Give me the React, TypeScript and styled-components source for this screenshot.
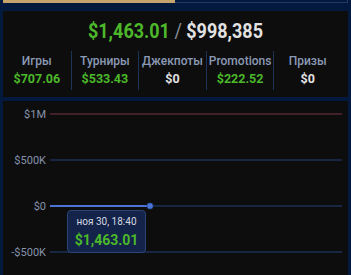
import styled, { createGlobalStyle } from "styled-components";

const GlobalStyle = createGlobalStyle`
  html, body {
    margin: 0;
    padding: 0;
    background: #031a3e;
    font-family: Roboto, "Liberation Sans", sans-serif;
    overflow: hidden;
  }
`;

interface Stat {
  label: string;
  value: string;
  positive: boolean;
}

const stats: Stat[] = [
  { label: "Игры", value: "$707.06", positive: true },
  { label: "Турниры", value: "$533.43", positive: true },
  { label: "Джекпоты", value: "$0", positive: false },
  { label: "Promotions", value: "$222.52", positive: true },
  { label: "Призы", value: "$0", positive: false },
];

const ticks = [
  { label: "$1M", y: 13, color: "#7b3343" },
  { label: "$500K", y: 59, color: "#22427a" },
  { label: "$0", y: 105, color: "#22427a" },
  { label: "-$500K", y: 151, color: "#22427a" },
];

function App() {
  return (
    <Page>
      <GlobalStyle />
      <Progress>
        <ProgressFill style={{ width: "50%" }} />
      </Progress>

      <Summary>
        <Total>
          <Green>$1,463.01</Green>
          <Slash> / </Slash>
          <Goal>$998,385</Goal>
        </Total>
        <StatGrid>
          {stats.map((s, i) => (
            <StatCell key={s.label} $first={i === 0}>
              <StatLabel>{s.label}</StatLabel>
              <StatValue $positive={s.positive}>{s.value}</StatValue>
            </StatCell>
          ))}
        </StatGrid>
      </Summary>

      <ChartCard>
        <svg width="345" height="180" viewBox="0 0 345 180">
          {ticks.map((t) => (
            <g key={t.label}>
              <text
                x="43"
                y={t.y + 4}
                textAnchor="end"
                fontSize="11"
                fontFamily="Roboto, sans-serif"
                fill="#8593ab"
              >
                {t.label}
              </text>
              <line x1="47" y1={t.y} x2="339" y2={t.y} stroke={t.color} strokeWidth="1" />
            </g>
          ))}
          <line x1="47" y1="105" x2="147" y2="105" stroke="#4a74d6" strokeWidth="2" />
          <circle cx="147" cy="105" r="3" fill="#4a74d6" stroke="#2c4f9e" strokeWidth="1" />
        </svg>
        <Tooltip>
          <TipDate>ноя 30, 18:40</TipDate>
          <TipValue>$1,463.01</TipValue>
        </Tooltip>
      </ChartCard>
    </Page>
  );
}

const Page = styled.div`
  padding: 0 3px;
  height: 275px;
  box-sizing: border-box;
`;

const Progress = styled.div`
  height: 3px;
  box-sizing: border-box;
  border: 1px solid #1f3a66;
  border-top: none;
  margin-bottom: 8px;
`;

const ProgressFill = styled.div`
  height: 3px;
  margin-left: -1px;
  background: #c7a46c;
`;

const Summary = styled.div`
  background: #0d0d0d;
  height: 86px;
  padding-top: 9px;
  box-sizing: border-box;
`;

const Total = styled.div`
  text-align: center;
  font-size: 18px;
  font-weight: 700;
  line-height: 22px;
  transform: scaleY(1.1);
`;

const Green = styled.span`
  color: #4cb82a;
`;

const Slash = styled.span`
  color: #8a8f98;
  font-weight: 400;
`;

const Goal = styled.span`
  color: #e2e2e2;
`;

const StatGrid = styled.div`
  display: grid;
  grid-template-columns: repeat(5, 1fr);
  width: 338px;
  margin-top: 9px;
`;

const StatCell = styled.div<{ $first: boolean }>`
  display: flex;
  flex-direction: column;
  align-items: center;
  gap: 2px;
  border-left: ${(p) => (p.$first ? "none" : "1px solid #1d3358")};
  padding: 3px 0 3px;
`;

const StatLabel = styled.div`
  color: #8b9ab5;
  font-size: 12px;
  font-weight: 500;
  line-height: 15px;
`;

const StatValue = styled.div<{ $positive: boolean }>`
  color: ${(p) => (p.$positive ? "#4cb82a" : "#e2e2e2")};
  font-size: 12.5px;
  font-weight: 700;
  line-height: 16px;
`;

const ChartCard = styled.div`
  margin-top: 4px;
  background: #0d0d0d;
  height: 180px;
  position: relative;

  svg {
    display: block;
  }
`;

const Tooltip = styled.div`
  position: absolute;
  left: 64px;
  top: 109px;
  width: 79px;
  height: 43px;
  box-sizing: border-box;
  background: #13234a;
  border: 1px solid #2a4575;
  border-radius: 4px;
  display: flex;
  flex-direction: column;
  align-items: center;
  justify-content: center;
  gap: 4px;
`;

const TipDate = styled.div`
  color: #d6d9e0;
  font-size: 10px;
  line-height: 12px;
`;

const TipValue = styled.div`
  color: #4cb82a;
  font-size: 14px;
  font-weight: 700;
  line-height: 16px;
`;

export default App;
